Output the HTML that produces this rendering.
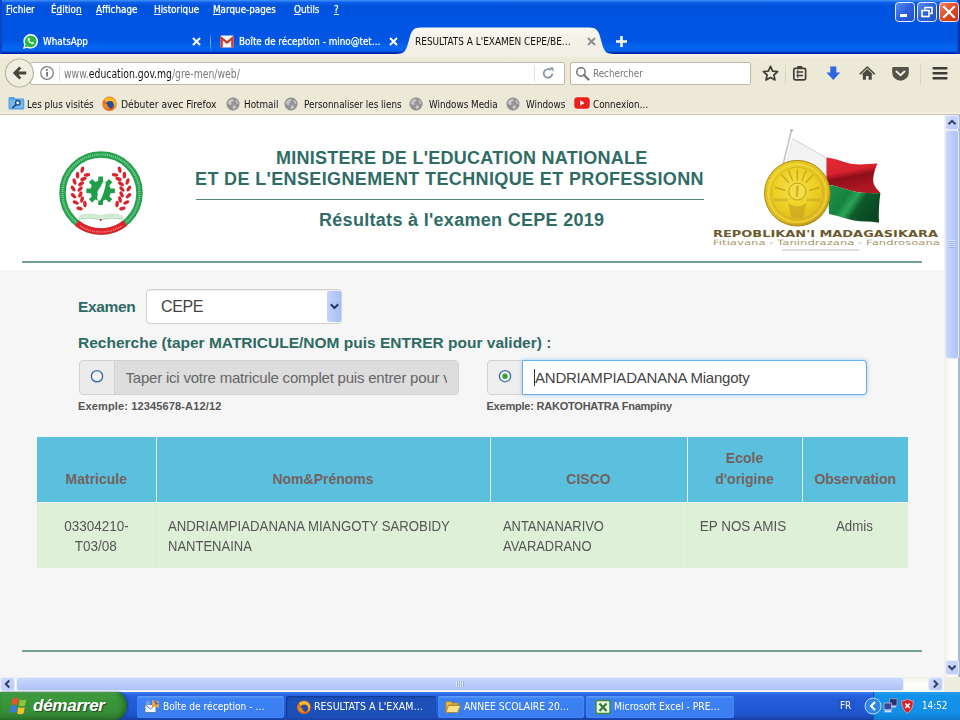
<!DOCTYPE html>
<html lang="fr">
<head>
<meta charset="utf-8">
<title>RESULTATS A L'EXAMEN CEPE/BEPC</title>
<style>
*{box-sizing:border-box;margin:0;padding:0}
html,body{width:960px;height:720px;overflow:hidden;background:#f7f7f7}
body{position:relative;font-family:"Liberation Sans","DejaVu Sans",sans-serif;font-size:12px;color:#000}
.abs{position:absolute}
.ui{font-family:"DejaVu Sans","Liberation Sans",sans-serif;font-stretch:condensed;white-space:nowrap;transform:scaleX(.89);transform-origin:0 0}
/* ---------- window chrome ---------- */
#topblue{left:0;top:0;width:960px;height:54px;background:linear-gradient(#4492f6 0,#0c5fe9 2.5px,#0051d9 6px,#0054e1 11px,#0055e3 40px,#0565ee 47px,#0562ec 51px,#0032ba 52.5px,#001ea6 53.6px,#0a2aa8 54px)}
#rightedge{left:957px;top:0;width:3px;height:54px;background:linear-gradient(90deg,#0a4bd8,#062e9e)}
#leftedge{left:0;top:0;width:2px;height:54px;background:#0a43c8}
.menu{top:3px;color:#fff;font-size:11px;line-height:14px;text-shadow:0 0 1px #dfe8ff}
.menu u{text-decoration:underline}
.tabtxt{top:35px;color:#fff;font-size:11px;line-height:14px;text-shadow:0 0 1px #dfe8ff}
#acttab{left:396px;top:27px;width:222px;height:27px}
#navbar{left:0;top:54px;width:960px;height:38px;background:linear-gradient(#f6f4ea 0,#f0eee0 2px,#ece9d8 6px)}
#bmbar{left:0;top:92px;width:960px;height:23px;background:linear-gradient(#ece9d8 0,#ece9d8 20px,#f4f2e6 21px,#f4f2e6 22px,#c4c1b0 22px)}
.bm{top:98px;font-size:11px;line-height:13px;color:#111}
.field{background:#fff;border:1px solid #bdbaa8;border-radius:2px}
/* ---------- page ---------- */
#page{left:0;top:115px;width:944px;height:562px;background:#f6f6f6;overflow:hidden}
#pg{left:0;top:2px;width:944px;height:560px}
#header{left:0;top:-2px;width:944px;height:155px;background:#fff}
.h1{color:#2f6c66;font-weight:bold;white-space:nowrap}
.lbl{color:#2d6a62;font-weight:bold;white-space:nowrap}
.hr{height:1px;background:#5c8c86}
.hr2{height:2px;background:#74a098}
th{vertical-align:bottom;padding:0 8px 11.400px;border-left:1px solid #e4f3f9;font-weight:bold;text-align:center}
th:first-child,td:first-child{border-left:0}
.sx{display:inline-block;transform-origin:50% 50%}
.sl{transform-origin:0 50%}
td{vertical-align:top;padding:13px 11px 0;border-left:1px solid #dcebe0;border-top:1px solid #fbf3f3}
.sbtn{background:linear-gradient(135deg,#cfdcfd,#b6c9f9);border-radius:2px;box-shadow:0 0 0 1px #e6ecfb}
/* ---------- taskbar ---------- */
#taskbar{left:0;top:692px;width:960px;height:28px;background:linear-gradient(#3a80f0 0,#2663e0 3px,#245edb 6px,#2055d0 22px,#1941a5 100%)}
.tbtn{top:696px;height:22px;border-radius:3px;background:linear-gradient(#5a9bf8 0,#3c81f3 3px,#3a7df0 100%);color:#fff;font-size:11px;line-height:22px;box-shadow:inset 0 0 1px #8fbaff}
.tl{top:700px;font-size:11px;line-height:14px;color:#fff}
.tbtn.on{background:#1c50b8;box-shadow:inset 1px 1px 2px #0d3590}
</style>
</head>
<body>
<!-- top blue: menu + tabs -->
<div id="topblue" class="abs"></div>

<svg id="acttab" class="abs" viewBox="0 0 222 27"><defs><linearGradient id="tg" x1="0" y1="0" x2="0" y2="1"><stop offset="0" stop-color="#f8f7f0"/><stop offset=".6" stop-color="#f3f1e6"/><stop offset="1" stop-color="#f4f2e8"/></linearGradient></defs><path d="M0 27C9 27 10 24 13 13C15.500 3 17.500 .5 25 .5L193 .5C200.500 .5 202.500 3 205 13C208 24 209 27 218 27Z" fill="url(#tg)"/></svg>
<div id="rightedge" class="abs"></div><div id="leftedge" class="abs"></div>
<!-- window buttons -->
<svg class="abs" style="left:894px;top:1px" width="66" height="22" viewBox="0 0 66 22">
  <defs>
    <linearGradient id="gb" x1="0" y1="0" x2="1" y2="1"><stop offset="0" stop-color="#5f8df0"/><stop offset=".5" stop-color="#2b5fdc"/><stop offset="1" stop-color="#2452c8"/></linearGradient>
    <linearGradient id="gr" x1="0" y1="0" x2="1" y2="1"><stop offset="0" stop-color="#f0876a"/><stop offset=".5" stop-color="#dc4a22"/><stop offset="1" stop-color="#c23412"/></linearGradient>
  </defs>
  <rect x="1.5" y="1.5" width="19" height="19" rx="3" fill="url(#gb)" stroke="#e8eefc" stroke-width="1"/>
  <rect x="6" y="13" width="7" height="3" fill="#fff"/>
  <rect x="23.500" y="1.500" width="19" height="19" rx="3" fill="url(#gb)" stroke="#e8eefc" stroke-width="1"/>
  <path d="M31 8.500V6.500H38V12.500H36" fill="none" stroke="#fff" stroke-width="1.600"/>
  <rect x="28" y="9.500" width="7" height="6" fill="none" stroke="#fff" stroke-width="1.600"/>
  <rect x="45.500" y="1.500" width="19" height="19" rx="3" fill="url(#gr)" stroke="#f4e4e0" stroke-width="1"/>
  <path d="M50 6L60 16M60 6L50 16" stroke="#fff" stroke-width="2.200" stroke-linecap="square"/>
</svg>

<!-- tab 1: whatsapp icon, close, separator -->
<svg class="abs" style="left:22px;top:33px" width="17" height="17" viewBox="0 0 17 17">
  <path d="M1 16L2.300 11.800A7.300 7.300 0 1 1 5.200 14.700Z" fill="#fff"/>
  <path d="M2.800 14.300L3.700 11.600A5.900 5.900 0 1 1 5.700 13.500Z" fill="#2cb742"/>
  <path d="M6.300 4.700C5.200 5.600 5.600 7.600 7.200 9.300C8.900 11 10.900 11.600 11.800 10.500L12 9.700L10.400 8.800L9.700 9.500C8.800 9.200 7.800 8.200 7.400 7.200L8.100 6.500L7.200 4.800Z" fill="#fff"/>
</svg>
<svg class="abs" style="left:191px;top:36px" width="11" height="11" viewBox="0 0 11 11"><path d="M2 2L9 9M9 2L2 9" stroke="#fff" stroke-width="2"/></svg>
<div class="abs" style="left:210px;top:32px;width:1px;height:20px;background:linear-gradient(rgba(255,255,255,0),rgba(200,215,255,.7),rgba(255,255,255,0))"></div>
<!-- tab 2: gmail icon, close -->
<svg class="abs" style="left:220px;top:35px" width="14" height="13" viewBox="0 0 15 13" preserveAspectRatio="none">
  <rect x=".5" y=".5" width="14" height="12" rx="1" fill="#f4f4f4"/>
  <path d="M.5 12.500V1.500L7.500 7L14.500 1.500V12.500H12V5.500L7.500 9L3 5.500V12.500Z" fill="#d9392b"/>
  <path d="M.5 1.500L7.500 7L14.500 1.500" fill="none" stroke="#c23321" stroke-width="1.200"/>
</svg>
<svg class="abs" style="left:388px;top:36px" width="11" height="11" viewBox="0 0 11 11"><path d="M2 2L9 9M9 2L2 9" stroke="#fff" stroke-width="2"/></svg>
<!-- active tab close, new tab -->
<svg class="abs" style="left:586px;top:36px" width="11" height="11" viewBox="0 0 11 11"><path d="M2 2L9 9M9 2L2 9" stroke="#8a8f96" stroke-width="1.900"/></svg>
<svg class="abs" style="left:614px;top:34px" width="15" height="15" viewBox="0 0 15 15"><path d="M7.500 2V13M2 7.500H13" stroke="#fffbe8" stroke-width="2.600"/></svg>
<div class="abs ui menu" style="left:6px"><u>F</u>ichier</div>
<div class="abs ui menu" style="left:51px">É<u>d</u>itio<u>n</u></div>
<div class="abs ui menu" style="left:96px"><u>A</u>ffichage</div>
<div class="abs ui menu" style="left:154px"><u>H</u>istorique</div>
<div class="abs ui menu" style="left:213px"><u>M</u>arque-pages</div>
<div class="abs ui menu" style="left:294px"><u>O</u>utils</div>
<div class="abs ui menu" style="left:334px"><u>?</u></div>

<div class="abs ui tabtxt" style="left:43px">WhatsApp</div>
<div class="abs ui tabtxt" style="left:239px">Boîte de réception - mino@tet…</div>
<div class="abs ui tabtxt" style="left:415px;color:#111;text-shadow:none;transform:scaleX(.905)">RESULTATS A L'EXAMEN CEPE/BE…</div>

<!-- nav bar -->
<div id="navbar" class="abs"></div>
<div class="abs field" style="left:30px;top:62px;width:535px;height:22.500px"></div>
<div class="abs ui" id="url" style="left:64px;top:67px;font-size:12px;line-height:14px;color:#777;transform:scaleX(.86)">www.<span style="color:#111">education.gov.mg</span>/gre-men/web/</div>
<div class="abs field" style="left:570px;top:62px;width:181px;height:22.500px"></div>
<div class="abs ui" style="left:593px;top:67px;font-size:11px;line-height:14px;color:#777">Rechercher</div>


<!-- back button -->
<svg class="abs" style="left:3px;top:57px" width="34" height="34" viewBox="0 0 34 34">
  <circle cx="16.400" cy="16" r="14" fill="#f0eee1" stroke="#b9b5a2" stroke-width="1.200"/>
  <path d="M9.800 16L16.300 9.500L18.300 11.500L15.400 14.400H23.200V17.600H15.400L18.300 20.500L16.300 22.500Z" fill="#47463a"/>
</svg>
<!-- info icon -->
<svg class="abs" style="left:39px;top:65px" width="16" height="16" viewBox="0 0 16 16">
  <circle cx="8" cy="8" r="6.300" fill="#fff" stroke="#7c7c7c" stroke-width="1.200"/>
  <rect x="7.200" y="7" width="1.700" height="4.600" fill="#6a6a6a"/><circle cx="8" cy="4.900" r="1" fill="#6a6a6a"/>
</svg>
<div class="abs" style="left:59px;top:66px;width:1px;height:15px;background:#e4e2d8"></div>
<!-- reload -->
<div class="abs" style="left:534px;top:65px;width:1px;height:17px;background:#e4e2d8"></div>
<svg class="abs" style="left:541px;top:66px" width="15" height="15" viewBox="0 0 15 15">
  <path d="M11.300 7.500A4.300 4.300 0 1 1 9.600 4" fill="none" stroke="#8396ad" stroke-width="1.800"/>
  <path d="M8.300 1.500H12.500V5.700Z" fill="#8396ad"/>
</svg>
<!-- search magnifier -->
<svg class="abs" style="left:575px;top:66px" width="15" height="15" viewBox="0 0 15 15">
  <circle cx="6" cy="6" r="4.200" fill="none" stroke="#6f7378" stroke-width="1.500"/>
  <path d="M9 9L13.500 13.500" stroke="#6f7378" stroke-width="2.200" stroke-linecap="round"/>
</svg>
<!-- toolbar icons -->
<svg class="abs" style="left:760px;top:62px" width="190" height="24" viewBox="0 0 190 24">
  <path d="M10.500 4.300L12.600 9.100L17.700 9.600L13.900 13L15 18L10.500 15.400L6 18L7.100 13L3.300 9.600L8.400 9.100Z" fill="none" stroke="#3f3f38" stroke-width="1.700" stroke-linejoin="round"/>
  <rect x="25" y="3" width="1" height="18" fill="#d8d5c6"/>
  <rect x="33.800" y="6.300" width="11.800" height="11.500" rx="1.500" fill="none" stroke="#3f3f38" stroke-width="1.700"/>
  <rect x="37.200" y="4" width="5" height="3" fill="#3f3f38"/>
  <path d="M36.500 10H43M36.500 13.500H43" stroke="#3f3f38" stroke-width="1.500"/><path d="M37.800 8V16" stroke="#3f3f38" stroke-width="1"/>
  <path d="M70.300 4.500H76.300V10.500H80.200L73.300 18L66.400 10.500H70.300Z" fill="#2a67e0"/>
  <g transform="translate(107.300 11.800) scale(.84) translate(-107.300 -11.300)"><path d="M107.300 5.500L100.500 12H102V18.500H105.700V14H108.900V18.500H112.600V12H114.100Z" fill="#4a4a40"/>
  <path d="M98.300 11.800L107.300 3.200L116.300 11.800" stroke="#4a4a40" stroke-width="1.900" fill="none"/></g>
  <path d="M133.500 5H147.500A1.300 1.300 0 0 1 148.800 6.300V10.500A8.300 8.300 0 0 1 132.200 10.500V6.300A1.300 1.300 0 0 1 133.500 5Z" fill="#54534a"/>
  <path d="M136.500 9.500L140.500 13.300L144.500 9.500" fill="none" stroke="#efeddf" stroke-width="2" stroke-linecap="round" stroke-linejoin="round"/>
  <rect x="160" y="1" width="1" height="22" fill="#d8d5c6"/>
  <rect x="172.500" y="5" width="15" height="2.600" rx=".8" fill="#3f3f38"/><rect x="172.500" y="10" width="15" height="2.600" rx=".8" fill="#3f3f38"/><rect x="172.500" y="15" width="15" height="2.600" rx=".8" fill="#3f3f38"/>
</svg>

<!-- bookmarks bar -->
<div id="bmbar" class="abs"></div>
<div class="abs ui bm" style="left:27px">Les plus visités</div>
<div class="abs ui bm" style="left:121px;transform:scaleX(.93)">Débuter avec Firefox</div>
<div class="abs ui bm" style="left:244px">Hotmail</div>
<div class="abs ui bm" style="left:304px">Personnaliser les liens</div>
<div class="abs ui bm" style="left:429px">Windows Media</div>
<div class="abs ui bm" style="left:526px">Windows</div>
<div class="abs ui bm" style="left:593px">Connexion…</div>


<svg class="abs" style="left:8px;top:96px" width="17" height="14" viewBox="0 0 17 14">
  <path d="M.5 2.300A1.300 1.300 0 0 1 1.800 1H6L7.500 2.500H15A1.300 1.300 0 0 1 16.300 3.800V12.200A1.300 1.300 0 0 1 15 13.500H1.800A1.300 1.300 0 0 1 .5 12.200Z" fill="#55a4e6"/>
  <rect x="2" y="4" width="13" height="8" fill="#8cc4f2" opacity=".6"/>
  <circle cx="9.800" cy="6.800" r="2.300" fill="#cfeeff" stroke="#234a78" stroke-width="1.300"/>
  <path d="M8 8.600L4.800 11.600" stroke="#234a78" stroke-width="1.700" stroke-linecap="round"/>
</svg>
<svg class="abs" style="left:101px;top:95px" width="17" height="17" viewBox="0 0 17 17">
  <circle cx="8.500" cy="8.800" r="7.200" fill="#e8661c"/>
  <path d="M3 4.500C5.500 1.500 11.500 1.500 14 5C15.800 8 15 12 12.500 14.200C14 11.500 13.500 8.500 11.500 7C10 6 8 6.200 7.500 7.500C6.500 7 5.800 7.200 5.200 8C4.500 6.800 4 5.500 3 4.500Z" fill="#f9b824"/>
  <circle cx="8.800" cy="9.800" r="3.900" fill="#2b4f9e"/>
  <path d="M2 6C3 9 4.500 9.500 6.500 9.200C6 11 7.500 12.800 9.500 13C7.500 14.800 3.500 14 2.200 11C1.500 9.300 1.500 7.500 2 6Z" fill="#f08a1c"/>
</svg>
<svg class="abs" style="left:226px;top:96.500px" width="14" height="14" viewBox="0 0 15 15"><circle cx="7.500" cy="7.500" r="6.700" fill="#949494"/><circle cx="7.500" cy="7.500" r="6.500" fill="none" stroke="#808080" stroke-width=".7"/><path d="M2.500 4.500C4 2.500 6.500 1.800 8 2.500C8.500 4 7 4.800 6 5.500C5.500 6.500 6.500 7.500 5.500 8.500C4.500 9 3.500 7.500 2 7.800C1.700 6.600 1.900 5.500 2.500 4.500ZM10.500 3C12.500 4 13.500 6 13.300 8C12.300 7.800 11.500 7 11 6C10.300 5 10 4 10.500 3ZM7.500 9C9 8.500 10.500 9 11 10.500C10.500 12 9 13 7.800 13.200C7 12 7 10.500 7.500 9Z" fill="#c4c4c4"/></svg><svg class="abs" style="left:284px;top:96.500px" width="14" height="14" viewBox="0 0 15 15"><circle cx="7.500" cy="7.500" r="6.700" fill="#949494"/><circle cx="7.500" cy="7.500" r="6.500" fill="none" stroke="#808080" stroke-width=".7"/><path d="M2.500 4.500C4 2.500 6.500 1.800 8 2.500C8.500 4 7 4.800 6 5.500C5.500 6.500 6.500 7.500 5.500 8.500C4.500 9 3.500 7.500 2 7.800C1.700 6.600 1.900 5.500 2.500 4.500ZM10.500 3C12.500 4 13.500 6 13.300 8C12.300 7.800 11.500 7 11 6C10.300 5 10 4 10.500 3ZM7.500 9C9 8.500 10.500 9 11 10.500C10.500 12 9 13 7.800 13.200C7 12 7 10.500 7.500 9Z" fill="#c4c4c4"/></svg><svg class="abs" style="left:409px;top:96.500px" width="14" height="14" viewBox="0 0 15 15"><circle cx="7.500" cy="7.500" r="6.700" fill="#949494"/><circle cx="7.500" cy="7.500" r="6.500" fill="none" stroke="#808080" stroke-width=".7"/><path d="M2.500 4.500C4 2.500 6.500 1.800 8 2.500C8.500 4 7 4.800 6 5.500C5.500 6.500 6.500 7.500 5.500 8.500C4.500 9 3.500 7.500 2 7.800C1.700 6.600 1.900 5.500 2.500 4.500ZM10.500 3C12.500 4 13.500 6 13.300 8C12.300 7.800 11.500 7 11 6C10.300 5 10 4 10.500 3ZM7.500 9C9 8.500 10.500 9 11 10.500C10.500 12 9 13 7.800 13.200C7 12 7 10.500 7.500 9Z" fill="#c4c4c4"/></svg><svg class="abs" style="left:506px;top:96.500px" width="14" height="14" viewBox="0 0 15 15"><circle cx="7.500" cy="7.500" r="6.700" fill="#949494"/><circle cx="7.500" cy="7.500" r="6.500" fill="none" stroke="#808080" stroke-width=".7"/><path d="M2.500 4.500C4 2.500 6.500 1.800 8 2.500C8.500 4 7 4.800 6 5.500C5.500 6.500 6.500 7.500 5.500 8.500C4.500 9 3.500 7.500 2 7.800C1.700 6.600 1.900 5.500 2.500 4.500ZM10.500 3C12.500 4 13.500 6 13.300 8C12.300 7.800 11.500 7 11 6C10.300 5 10 4 10.500 3ZM7.500 9C9 8.500 10.500 9 11 10.500C10.500 12 9 13 7.800 13.200C7 12 7 10.500 7.500 9Z" fill="#c4c4c4"/></svg>
<svg class="abs" style="left:574px;top:97px" width="16" height="12" viewBox="0 0 16 12"><rect x=".3" y=".3" width="15.400" height="11.400" rx="3" fill="#e8211c"/><path d="M6.300 3.200L10.500 6L6.300 8.800Z" fill="#fff"/></svg>

<!-- page content -->
<div id="page" class="abs"><div id="pg" class="abs">
  <div id="header" class="abs"></div>
<svg class="abs" id="logoL" style="left:51.400px;top:25.500px" width="100" height="100" viewBox="0 0 100 100">
  <circle cx="50" cy="50" r="38.500" fill="#fff" stroke="#25a24e" stroke-width="6.500"/>
  <circle cx="50" cy="50" r="38.500" fill="none" stroke="#d9f0df" stroke-width="2.200" stroke-dasharray="1.100 1" opacity=".55"/>
  <path d="M25.770 79.920A38.500 38.500 0 0 0 74.230 79.920" fill="none" stroke="#e0222c" stroke-width="6.500"/>
  <path d="M29 82.800A38.500 38.500 0 0 0 71 82.800" fill="none" stroke="#f6c9cb" stroke-width="1.600" stroke-dasharray="1 .9" opacity=".6"/>
  <g fill="#d9232d"><ellipse cx="33.9" cy="61.0" rx="3.300" ry="1.750" transform="rotate(-94 33.9 61.0)"/><ellipse cx="28.6" cy="65.5" rx="3.300" ry="1.750" transform="rotate(-166 28.6 65.5)"/><ellipse cx="31.0" cy="56.5" rx="3.300" ry="1.750" transform="rotate(-79 31.0 56.5)"/><ellipse cx="24.7" cy="59.5" rx="3.300" ry="1.750" transform="rotate(-151 24.7 59.5)"/><ellipse cx="29.4" cy="51.4" rx="3.300" ry="1.750" transform="rotate(-65 29.4 51.4)"/><ellipse cx="22.5" cy="52.7" rx="3.300" ry="1.750" transform="rotate(-137 22.5 52.7)"/><ellipse cx="29.1" cy="46.0" rx="3.300" ry="1.750" transform="rotate(-50 29.1 46.0)"/><ellipse cx="22.1" cy="45.5" rx="3.300" ry="1.750" transform="rotate(-122 22.1 45.5)"/><ellipse cx="30.1" cy="40.8" rx="3.300" ry="1.750" transform="rotate(-35 30.1 40.8)"/><ellipse cx="23.5" cy="38.5" rx="3.300" ry="1.750" transform="rotate(-107 23.5 38.5)"/><ellipse cx="32.5" cy="36.0" rx="3.300" ry="1.750" transform="rotate(-21 32.5 36.0)"/><ellipse cx="26.6" cy="32.1" rx="3.300" ry="1.750" transform="rotate(-93 26.6 32.1)"/><ellipse cx="35.9" cy="31.9" rx="3.300" ry="1.750" transform="rotate(-6 35.9 31.9)"/><ellipse cx="31.3" cy="26.7" rx="3.300" ry="1.750" transform="rotate(-78 31.3 26.7)"/><ellipse cx="66.1" cy="61.0" rx="3.300" ry="1.750" transform="rotate(-86 66.1 61.0)"/><ellipse cx="71.4" cy="65.5" rx="3.300" ry="1.750" transform="rotate(-14 71.4 65.5)"/><ellipse cx="69.0" cy="56.5" rx="3.300" ry="1.750" transform="rotate(-101 69.0 56.5)"/><ellipse cx="75.3" cy="59.5" rx="3.300" ry="1.750" transform="rotate(-29 75.3 59.5)"/><ellipse cx="70.6" cy="51.4" rx="3.300" ry="1.750" transform="rotate(-115 70.6 51.4)"/><ellipse cx="77.5" cy="52.7" rx="3.300" ry="1.750" transform="rotate(-43 77.5 52.7)"/><ellipse cx="70.9" cy="46.0" rx="3.300" ry="1.750" transform="rotate(-130 70.9 46.0)"/><ellipse cx="77.9" cy="45.5" rx="3.300" ry="1.750" transform="rotate(-58 77.9 45.5)"/><ellipse cx="69.9" cy="40.8" rx="3.300" ry="1.750" transform="rotate(-145 69.9 40.8)"/><ellipse cx="76.5" cy="38.5" rx="3.300" ry="1.750" transform="rotate(-73 76.5 38.5)"/><ellipse cx="67.5" cy="36.0" rx="3.300" ry="1.750" transform="rotate(-159 67.5 36.0)"/><ellipse cx="73.4" cy="32.1" rx="3.300" ry="1.750" transform="rotate(-87 73.4 32.1)"/><ellipse cx="64.1" cy="31.9" rx="3.300" ry="1.750" transform="rotate(-174 64.1 31.9)"/><ellipse cx="68.7" cy="26.7" rx="3.300" ry="1.750" transform="rotate(-102 68.7 26.7)"/></g>
  <path d="M47.2 37.8L47.3 33.5L51.9 33.5L52.0 37.8L55.0 39.0L58.1 36.1L61.3 39.3L58.4 42.4L59.6 45.4L63.9 45.5L63.9 50.1L59.6 50.2L58.4 53.2L61.3 56.3L58.1 59.5L55.0 56.6L52.0 57.8L51.9 62.1L47.3 62.1L47.2 57.8L44.2 56.6L41.1 59.5L37.9 56.3L40.8 53.2L39.6 50.2L35.3 50.1L35.3 45.5L39.6 45.4L40.8 42.4L37.9 39.3L41.1 36.1L44.2 39.0Z" fill="#219e49"/>
  <path d="M53 37.500C55 38.500 55 41 54.300 43.500C53.500 47 52.500 50.500 51 54C50 56.500 48.500 58.500 47 57.500C45.800 56 46.300 53.500 46.800 51.500C46 49.500 46.800 47.500 48 46C49.500 44 50.800 41.500 51.600 39.500Z" fill="#fff"/>
  <path d="M28 72.500C35 69.800 43 69.800 49.600 72.500C56 69.800 65 69.800 72 72.500L72 75.500C65 73.500 56 73.500 49.600 76.300C43 73.500 35 73.500 28 75.500Z" fill="#cfe9d2"/>
  <path d="M28 76.300C35 74.500 43 74.500 49.600 77.200C56 74.500 65 74.500 72 76.300" fill="none" stroke="#86c792" stroke-width=".9"/>
  <circle cx="49.600" cy="77" r="1" fill="#d81f2a"/>
</svg>
<svg class="abs" id="logoR" style="left:705px;top:8px" width="240" height="135" viewBox="705 125 240 135">
  <defs>
    <radialGradient id="gold" cx=".45" cy=".42" r=".62"><stop offset="0" stop-color="#f6e04a"/><stop offset=".55" stop-color="#ecce22"/><stop offset=".85" stop-color="#dcb81c"/><stop offset="1" stop-color="#b08c18"/></radialGradient>
    <linearGradient id="fr" x1="0" y1="0" x2=".3" y2="1"><stop offset="0" stop-color="#e02a38"/><stop offset=".45" stop-color="#d8222e"/><stop offset=".62" stop-color="#8e0f1a"/><stop offset="1" stop-color="#b01824"/></linearGradient>
    <linearGradient id="fg" x1="0" y1="0" x2="1" y2=".5"><stop offset="0" stop-color="#1d9448"/><stop offset=".4" stop-color="#178240"/><stop offset=".55" stop-color="#2aa458"/><stop offset=".7" stop-color="#0e5a2a"/><stop offset="1" stop-color="#0a4822"/></linearGradient>
  </defs>
  <path d="M791.500 130L783.300 163.500" stroke="#c4c4c4" stroke-width="1.600"/>
  <circle cx="791.600" cy="130.300" r="1.400" fill="#b4b4b4"/>
  <path d="M792.500 138.500L826.500 157.500L828 200L786 164Z" fill="#f3f3f3" stroke="#e2e2e2" stroke-width=".7"/>
  <path d="M793 139L826.500 158" stroke="#d6d6d6" stroke-width="1"/>
  <path d="M826.500 157.500C833 158 840 160.500 848 163C856 165.500 866 164 877.500 163.500C874.500 170 872.500 177 873.500 183C874.500 187 878 190 880.400 193C870 193.500 860 193 852 191C844 189 837 186 830 185L826.500 186Z" fill="url(#fr)"/>
  <path d="M828 185C836 185.500 844 189 852 191C860 193 870 193.500 880.400 193C879 203 878.500 213 879 222.700C870 221 862 222 854 220.500C846 219 838 215.500 829 214Z" fill="url(#fg)"/>
  <circle cx="797.300" cy="193.200" r="32.800" fill="url(#gold)" stroke="#a8881a" stroke-width="1"/>
  <circle cx="797.300" cy="193.200" r="29" fill="none" stroke="#f3dc50" stroke-width="1.400" opacity=".7"/>
  <circle cx="797.300" cy="193.200" r="26" fill="none" stroke="#c4a220" stroke-width="1" opacity=".6"/>
  <circle cx="797.300" cy="191.500" r="8.500" fill="#f4de48" stroke="#c09c1c" stroke-width="1"/>
  <path d="M796.300 186L798.800 185.500L797.800 197L795.800 196.500Z" fill="#c8a422" opacity=".8"/>
  <g stroke="#c09c1c" stroke-width="1.400" opacity=".8"><path d="M797.300 180.500V169M789 183L781.500 174.500M805.600 183L813.100 174.500M785.500 190.500L775 187.500M809.100 190.500L819.600 187.500M792.800 181L788.500 170.500M801.800 181L806.100 170.500"/></g>
  <path d="M788 203C794 207.500 800.500 207.500 806.600 203L803 218H791.600Z" fill="#c8a422" opacity=".7"/>
  <path d="M774 200H788M806.600 200H820.600" stroke="#c8a422" stroke-width="3" opacity=".5"/>
  <text x="713" y="236.800" font-family="'DejaVu Sans','Liberation Sans',sans-serif" font-weight="bold" font-size="9.300" fill="#6a5a2c" textLength="225" lengthAdjust="spacingAndGlyphs">REPOBLIKAN'I MADAGASIKARA</text>
  <text x="713" y="244.600" font-family="'DejaVu Sans','Liberation Sans',sans-serif" font-size="7.200" fill="#a4986a" textLength="227" lengthAdjust="spacingAndGlyphs">Fitiavana - Tanindrazana - Fandrosoana</text>
  <rect x="782" y="249.500" width="77" height="1" fill="#bdbdbd"/>
</svg>
  <div class="abs h1" id="t1" style="left:276px;top:30px;font-size:18px;line-height:22px;letter-spacing:.26px">MINISTERE DE L'EDUCATION NATIONALE</div>
  <div class="abs h1" id="t2" style="left:195px;top:51px;font-size:18px;line-height:22px;letter-spacing:.37px">ET DE L'ENSEIGNEMENT TECHNIQUE ET PROFESSIONN</div>
  <div class="abs hr" style="left:196px;top:81.600px;width:508px;height:1.600px;background:#55877f"></div>
  <div class="abs h1" id="t3" style="left:319px;top:91.5px;font-size:18px;line-height:22px;letter-spacing:.3px">Résultats à l'examen CEPE 2019</div>
  <div class="abs hr2" style="left:22px;top:144px;width:900px"></div>

  <div class="abs lbl" id="l1" style="left:78px;top:180px;font-size:15.5px;line-height:20px;letter-spacing:-.35px">Examen</div>
  <div class="abs" id="sel" style="left:146px;top:172px;width:196px;height:35px;background:#fff;border:1px solid #d0d0d0;border-radius:4px;box-shadow:inset 0 1px 1px rgba(0,0,0,.075)"></div>
  <div class="abs" id="selt" style="left:161px;top:179px;font-size:16px;line-height:22px;color:#444;letter-spacing:-.4px">CEPE</div>
  <div class="abs lbl" id="l2" style="left:78px;top:216px;font-size:15.5px;line-height:20px;letter-spacing:0px">Recherche (taper MATRICULE/NOM puis ENTRER pour valider) :</div>

  <div class="abs" style="left:79px;top:242.500px;width:380px;height:35px;background:#ececec;border:1px solid #d2d2d2;border-radius:4px"></div>
  <div class="abs" style="left:114px;top:243.500px;width:344px;height:33px;background:#dddddd;border-left:1px solid #d0d0d0;border-radius:0 3px 3px 0"></div>
  <div class="abs" id="ph" style="left:125.500px;top:250px;width:321px;overflow:hidden;white-space:nowrap;font-size:15px;line-height:22px;color:#666;letter-spacing:-.21px">Taper ici votre matricule complet puis entrer pour valider</div>
  <div class="abs" id="ex1" style="left:78px;top:282px;font-size:11px;line-height:14px;font-weight:bold;color:#555;white-space:nowrap;letter-spacing:.14px">Exemple: 12345678-A12/12</div>

  <div class="abs" style="left:487px;top:242.500px;width:380px;height:35px;background:#eee;border:1px solid #d2d2d2;border-radius:4px"></div>
  <div class="abs" style="left:522px;top:242.500px;width:345px;height:35px;background:#fff;border:1px solid #66afe9;border-radius:0 4px 4px 0;box-shadow:0 0 4px rgba(102,175,233,.6)"></div>
  <div class="abs" id="nm" style="left:535px;top:250px;white-space:nowrap;font-size:15px;line-height:22px;color:#444;letter-spacing:-.22px">ANDRIAMPIADANANA Miangoty</div>
  <div class="abs" id="ex2" style="left:486.500px;top:282px;font-size:11px;line-height:14px;font-weight:bold;color:#555;white-space:nowrap;letter-spacing:-.22px">Exemple: RAKOTOHATRA Fnampiny</div>

  <div class="abs" style="left:327px;top:174px;width:14px;height:31px;border-radius:2px;background:linear-gradient(90deg,#c3d3fc,#b3c6f8 60%,#a9bef4)"></div>
  <svg class="abs" style="left:329px;top:185px" width="11" height="9" viewBox="0 0 11 9"><path d="M1.800 2.300L5.500 6L9.200 2.300" fill="none" stroke="#27375c" stroke-width="2"/></svg>
  <svg class="abs" style="left:89px;top:251px" width="16" height="16" viewBox="0 0 16 16"><circle cx="8" cy="8.200" r="5.600" fill="#f3f3f3" stroke="#3d6da5" stroke-width="1.400"/></svg>
  <svg class="abs" style="left:496.500px;top:251px" width="16" height="16" viewBox="0 0 16 16"><circle cx="8" cy="8.200" r="5.600" fill="#f6f6f6" stroke="#3d6da5" stroke-width="1.300"/><circle cx="8" cy="8.200" r="2.600" fill="#2ea32e"/></svg>
  <div class="abs" style="left:534px;top:252px;width:1px;height:17px;background:#333"></div>
  <table class="abs" id="tbl" style="left:37px;top:320px;width:871px;border-collapse:collapse;table-layout:fixed;font-size:14px;line-height:21px">
    <colgroup><col style="width:119px"><col style="width:334px"><col style="width:197px"><col style="width:115px"><col style="width:106px"></colgroup>
    <tr style="background:#5bc0de;height:65px;color:#74625f">
      <th>Matricule</th><th>Nom&amp;Prénoms</th><th>CISCO</th><th>Ecole<br>d'origine</th><th>Observation</th>
    </tr>
    <tr style="background:#dff0d8;height:66px;color:#555;font-size:14px;line-height:20.250px;white-space:nowrap">
      <td style="text-align:center"><span class="sx" style="transform:scaleX(.965)">03304210-</span><br><span class="sx" style="transform:scaleX(.965)">T03/08</span></td><td><span class="sx sl" style="transform:scaleX(.942)">ANDRIAMPIADANANA MIANGOTY SAROBIDY</span><br><span class="sx sl" style="transform:scaleX(.929)">NANTENAINA</span></td><td style="padding-left:12px"><span class="sx sl" style="transform:scaleX(.922)">ANTANANARIVO</span><br><span class="sx sl" style="transform:scaleX(.922)">AVARADRANO</span></td><td style="text-align:center"><span class="sx" style="transform:scaleX(.963);margin-left:-4px">EP NOS AMIS</span></td><td style="text-align:center"><span class="sx" style="transform:scaleX(.95);margin-left:-2px">Admis</span></td>
    </tr>
  </table>
  <div class="abs hr2" style="left:22px;top:532.5px;width:900px"></div>
</div></div>


<!-- scrollbars -->
<div class="abs" style="left:944px;top:115px;width:16px;height:562px;background:linear-gradient(90deg,#f0efe6,#fdfdfa 40%,#fbfbf6)"></div>
<div class="abs" style="left:958px;top:115px;width:2px;height:577px;background:#a9b8d6"></div>
<div class="abs sbtn" style="left:946px;top:116px;width:12px;height:13px"></div>
<svg class="abs" style="left:946px;top:116px" width="12" height="13" viewBox="0 0 12 13"><path d="M2.500 8.300L6 4.800L9.500 8.300" fill="none" stroke="#34425e" stroke-width="2"/></svg>
<div class="abs" style="left:946px;top:131px;width:12px;height:227px;border-radius:2px;background:linear-gradient(90deg,#c9d8fd,#bacdfb 50%,#adc2f6);box-shadow:0 0 0 1px #e6ecfb"></div>
<div class="abs" style="left:949px;top:240px;width:6px;height:8px;background:repeating-linear-gradient(#dfe8ff 0,#dfe8ff 1px,#98b0ea 1px,#98b0ea 2px)"></div>
<div class="abs sbtn" style="left:946px;top:661px;width:12px;height:13px"></div>
<svg class="abs" style="left:946px;top:661px" width="12" height="13" viewBox="0 0 12 13"><path d="M2.500 4.800L6 8.300L9.500 4.800" fill="none" stroke="#34425e" stroke-width="2"/></svg>

<div class="abs" style="left:0;top:677px;width:960px;height:15px;background:#efeddf"></div>
<div class="abs" style="left:0;top:677px;width:944px;height:15px;background:linear-gradient(#f0efe6,#fdfdfa 40%,#fbfbf6)"></div>
<div class="abs sbtn" style="left:1px;top:678px;width:13px;height:12px"></div>
<svg class="abs" style="left:1px;top:678px" width="13" height="12" viewBox="0 0 13 12"><path d="M8.300 2.500L4.800 6L8.300 9.500" fill="none" stroke="#34425e" stroke-width="2"/></svg>
<div class="abs" style="left:17px;top:678px;width:886px;height:12px;border-radius:2px;background:linear-gradient(#c9d8fd,#bacdfb 50%,#adc2f6);box-shadow:0 0 0 1px #e6ecfb"></div>
<div class="abs" style="left:456px;top:681px;width:8px;height:6px;background:repeating-linear-gradient(90deg,#dfe8ff 0,#dfe8ff 1px,#98b0ea 1px,#98b0ea 2px)"></div>
<div class="abs sbtn" style="left:929px;top:678px;width:13px;height:12px"></div>
<svg class="abs" style="left:929px;top:678px" width="13" height="12" viewBox="0 0 13 12"><path d="M4.800 2.500L8.300 6L4.800 9.500" fill="none" stroke="#34425e" stroke-width="2"/></svg>

<!-- taskbar -->
<div id="taskbar" class="abs"></div>
<div class="abs" style="left:0;top:692px;width:127px;height:28px;border-radius:0 11px 13px 0/0 14px 14px 0;background:linear-gradient(#5eb45c 0,#3f9e3f 3px,#3a963a 8px,#378f37 20px,#2d7a2e 100%);box-shadow:inset -3px 0 5px rgba(20,80,20,.6),1px 0 2px #143c8c"></div>
<svg class="abs" style="left:9px;top:696px" width="22" height="21" viewBox="0 0 20 19">
  <path d="M3.200 2.500C5 1.300 7 1.300 8.800 2.500L7.600 8.300C6 7.300 4 7.300 2 8.300Z" fill="#e8542a"/>
  <path d="M10 2.900C11.800 4 13.800 4 15.800 2.900L14.600 8.700C12.800 9.700 10.600 9.700 8.800 8.700Z" fill="#8cc63e"/>
  <path d="M1.800 9.500C3.600 8.400 5.600 8.400 7.400 9.500L6.200 15.300C4.400 14.200 2.400 14.200 .6 15.300Z" fill="#3c7be0"/>
  <path d="M8.600 9.900C10.400 11 12.400 11 14.400 9.900L13.200 15.700C11.400 16.800 9.200 16.800 7.400 15.700Z" fill="#f5c12e"/>
</svg>
<div class="abs" id="start" style="left:33px;top:696px;font:italic bold 17px/20px 'Liberation Sans',sans-serif;color:#fff;text-shadow:1px 1px 1px #1d4f1d;letter-spacing:-.25px;white-space:nowrap">démarrer</div>

<div class="abs tbtn" style="left:137px;width:147px"></div>
<div class="abs tbtn on" style="left:286px;width:150px"></div>
<div class="abs tbtn" style="left:438px;width:146px"></div>
<div class="abs tbtn" style="left:586px;width:148px"></div>
<div class="abs ui tl" style="left:163px;transform:scaleX(.917)">Boîte de réception - …</div>
<div class="abs ui tl" style="left:314px;transform:scaleX(.96)">RESULTATS A L'EXAM…</div>
<div class="abs ui tl" style="left:464px;transform:scaleX(.935)">ANNEE SCOLAIRE 20…</div>
<div class="abs ui tl" style="left:614px;transform:scaleX(.935)">Microsoft Excel - PRE…</div>
<!-- task icons -->
<svg class="abs" style="left:144px;top:699px" width="16" height="16" viewBox="0 0 16 16">
  <rect x="1" y="5.500" width="11" height="8" fill="#f2f6fb" stroke="#5a78a8" stroke-width=".9"/><path d="M1 5.500L6.500 10L12 5.500" fill="none" stroke="#5a78a8" stroke-width=".9"/>
  <path d="M8 1L15 2.500V9L11 7.500L8 8.500Z" fill="#e9a53a"/><path d="M9.500 .8L14.500 4.500L12 6Z" fill="#3a6fd0"/><circle cx="4" cy="4" r="2.300" fill="#6fa0e8"/>
</svg>
<svg class="abs" style="left:296px;top:699px" width="16" height="16" viewBox="0 0 17 17">
  <circle cx="8.500" cy="8.800" r="7.200" fill="#e8661c"/>
  <path d="M3 4.500C5.500 1.500 11.500 1.500 14 5C15.800 8 15 12 12.500 14.200C14 11.500 13.500 8.500 11.500 7C10 6 8 6.200 7.500 7.500C6.500 7 5.800 7.200 5.200 8C4.500 6.800 4 5.500 3 4.500Z" fill="#f9b824"/>
  <circle cx="8.800" cy="9.800" r="3.900" fill="#2b4f9e"/>
  <path d="M2 6C3 9 4.500 9.500 6.500 9.200C6 11 7.500 12.800 9.500 13C7.500 14.800 3.500 14 2.200 11C1.500 9.300 1.500 7.500 2 6Z" fill="#f08a1c"/>
</svg>
<svg class="abs" style="left:445px;top:700px" width="16" height="14" viewBox="0 0 16 14">
  <path d="M.8 2.500A1 1 0 0 1 1.800 1.500H5.500L7 3H12.500A1 1 0 0 1 13.500 4V5H3.800L.8 12Z" fill="#e9b93c" stroke="#a87a16" stroke-width=".7"/>
  <path d="M3.500 5.500H15.500L12.700 12.500H.8Z" fill="#fbe08a" stroke="#a87a16" stroke-width=".7"/>
</svg>
<svg class="abs" style="left:595px;top:699px" width="16" height="16" viewBox="0 0 16 16">
  <rect x="1" y="1.500" width="14" height="13" rx="1.500" fill="#e9f4e4" stroke="#3d8a3a" stroke-width="1.400"/>
  <path d="M4.500 4.500L11.500 12M11.500 4.500L4.500 12" stroke="#2f7d2c" stroke-width="2.200"/>
</svg>
<!-- tray -->
<div class="abs" style="left:837px;top:699px;width:18px;height:14px;background:#1f52c4;opacity:.6"></div>
<div class="abs ui" style="left:840px;top:699px;font-size:11px;line-height:14px;color:#fff">FR</div>
<div class="abs" style="left:873px;top:692px;width:87px;height:28px;background:linear-gradient(#2ea3f2 0,#1392ea 3px,#1290e8 20px,#0f7ad0 100%);box-shadow:inset 1px 0 1px #0c50a8"></div>
<svg class="abs" style="left:864px;top:697px" width="18" height="18" viewBox="0 0 18 18">
  <circle cx="9" cy="9" r="8" fill="#2f86e8" stroke="#bcd8fb" stroke-width="1"/>
  <path d="M11 5L7 9L11 13" fill="none" stroke="#fff" stroke-width="2.200"/>
</svg>
<svg class="abs" style="left:883px;top:698px" width="15" height="16" viewBox="0 0 15 16">
  <rect x="6.500" y=".8" width="7.500" height="6.500" fill="#27306e" stroke="#9aa2c8" stroke-width=".8"/><rect x="8" y="8" width="5" height="1.500" fill="#c8cce0"/>
  <rect x="1" y="5" width="7.500" height="6.500" fill="#3a4796" stroke="#b7bddb" stroke-width=".8"/><rect x="1.500" y="12.300" width="7" height="2" fill="#d8dbea"/>
</svg>
<svg class="abs" style="left:901px;top:698px" width="13" height="16" viewBox="0 0 13 16">
  <path d="M6.500 1C8 2.300 10 2.800 12.300 2.800C12.300 8.500 10.500 12.800 6.500 15C2.500 12.800 .7 8.500 .7 2.800C3 2.800 5 2.300 6.500 1Z" fill="#d8222a" stroke="#f5b7b2" stroke-width=".7"/>
  <path d="M4.300 5.500L8.700 10M8.700 5.500L4.300 10" stroke="#fff" stroke-width="1.600"/>
</svg>
<div class="abs ui" style="left:922px;top:699px;font-size:11px;line-height:14px;color:#fff">14:52</div>
</body>
</html>
